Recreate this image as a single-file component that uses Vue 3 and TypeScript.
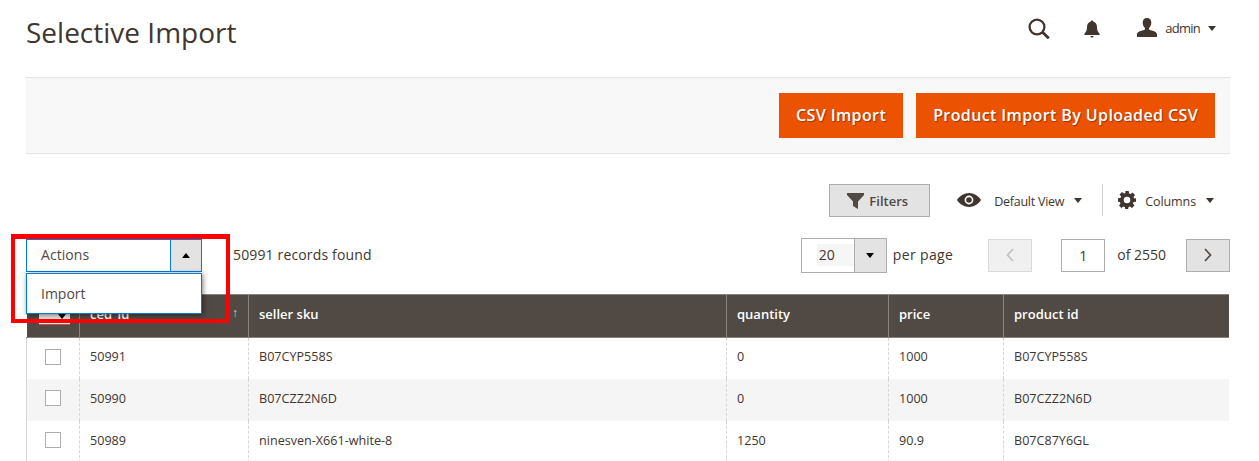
<script setup lang="ts">
interface Row { id: string; sku: string; qty: string; price: string; pid: string }
const rows: Row[] = [
  { id: '50991', sku: 'B07CYP558S', qty: '0', price: '1000', pid: 'B07CYP558S' },
  { id: '50990', sku: 'B07CZZ2N6D', qty: '0', price: '1000', pid: 'B07CZZ2N6D' },
  { id: '50989', sku: 'ninesven-X661-white-8', qty: '1250', price: '90.9', pid: 'B07C87Y6GL' },
]
</script>

<template>
  <div class="page">
    <header class="top">
      <h1>Selective Import</h1>
      <div class="top-icons">
        <svg class="i-search" width="22" height="21" viewBox="0 0 22 21"><circle cx="9" cy="9" r="7.400" fill="none" stroke="#41362f" stroke-width="2.300"/><path d="M14.500 14.300l6.300 6" stroke="#41362f" stroke-width="2.800" fill="none"/></svg>
        <svg class="i-bell" width="16" height="18" viewBox="0 0 16 18"><path d="M8 0.500c.9 0 1.400.6 1.500 1.300C12 2.400 13 4.600 13 7c0 3 .7 5 2.500 6.500V15H.5v-1.500C2.300 12 3 10 3 7c0-2.400 1-4.600 3.500-5.200C6.600 1.100 7.100.5 8 .5z" fill="#41362f"/><path d="M6.500 16h3c0 1-.6 1.500-1.500 1.500S6.500 17 6.500 16z" fill="#41362f"/></svg>
        <svg class="i-user" width="20" height="19" viewBox="0 0 20 19"><path d="M10 0c2.800 0 4.300 2 4.300 4.800 0 2.300-1 4.200-2.300 5.200v1.500c1 .8 8 1.500 8 5V19H0v-2.500c0-3.500 7-4.200 8-5V10C6.700 9 5.700 7.100 5.700 4.800 5.700 2 7.200 0 10 0z" fill="#41362f"/></svg>
        <span class="admin">admin</span>
        <i class="caret"></i>
      </div>
    </header>

    <div class="actions-bar">
      <button class="orange first">CSV Import</button>
      <button class="orange">Product Import By Uploaded CSV</button>
    </div>

    <div class="tools">
      <button class="filters">
        <svg width="17" height="16" viewBox="0 0 17 16"><path d="M0 0h17v2l-6 6.500V16l-5-3V8.500L0 2z" fill="#514943"/></svg>
        Filters
      </button>
      <div class="view">
        <svg width="24" height="14" viewBox="0 0 24 14"><path d="M12 0c5 0 9.500 3 12 7-2.500 4-7 7-12 7S2.500 11 0 7c2.500-4 7-7 12-7z" fill="#41362f"/><circle cx="12" cy="7" r="4.400" fill="#fff"/><circle cx="12" cy="7" r="2.800" fill="#41362f"/></svg>
        <span>Default View</span>
        <i class="caret"></i>
      </div>
      <div class="columns">
        <svg width="18" height="18" viewBox="0 0 18 18"><path fill="#41362f" fill-rule="evenodd" d="M7.300 0h3.400l.4 2.500 1.500.6 2-1.500 2.400 2.400-1.500 2 .6 1.500L18 7.300v3.400l-2.500.4-.6 1.500 1.500 2-2.400 2.400-2-1.500-1.500.6-.4 2.500H7.300l-.4-2.500-1.500-.6-2 1.500L1 14.600l1.500-2-.6-1.500L0 10.700V7.300l2.500-.4.600-1.500-1.500-2L4 1l2 1.500 1.500-.6zM9 5.700a3.300 3.300 0 100 6.600 3.300 3.300 0 000-6.600z"/></svg>
        <span>Columns</span>
        <i class="caret"></i>
      </div>
    </div>

    <div class="grid-bar">
      <div class="select">
        <span class="select-label">Actions</span>
        <span class="select-btn"><i class="caret up"></i></span>
      </div>
      <span class="found">50991 records found</span>
      <div class="pager">
        <div class="size">
          <span class="size-val"><b>20</b></span>
          <span class="size-btn"><i class="caret"></i></span>
        </div>
        <span class="per">per page</span>
        <button class="nav off"><svg width="10" height="14" viewBox="0 0 10 14"><path d="M8 1L2.500 7 8 13" fill="none" stroke="#c4c2c0" stroke-width="1.700"/></svg></button>
        <span class="cur">1</span>
        <span class="of">of 2550</span>
        <button class="nav"><svg width="10" height="14" viewBox="0 0 10 14"><path d="M2 1l5.500 6L2 13" fill="none" stroke="#514943" stroke-width="1.700"/></svg></button>
      </div>
    </div>

    <table>
      <colgroup>
        <col class="c0" /><col class="c1" /><col class="c2" /><col class="c3" /><col class="c4" /><col />
      </colgroup>
      <thead>
        <tr>
          <th class="chk-h"><span class="head-chk"><i></i></span></th>
          <th class="sort">ced_id<span class="arrow">↑</span></th>
          <th>seller sku</th>
          <th>quantity</th>
          <th>price</th>
          <th>product id</th>
        </tr>
      </thead>
      <tbody>
        <tr v-for="r in rows" :key="r.id">
          <td class="chk"><span class="box"></span></td>
          <td>{{ r.id }}</td>
          <td>{{ r.sku }}</td>
          <td>{{ r.qty }}</td>
          <td>{{ r.price }}</td>
          <td>{{ r.pid }}</td>
        </tr>
      </tbody>
    </table>

    <div class="menu">Import</div>
    <div class="highlight"></div>
  </div>
</template>

<style>
html, body { margin: 0; background: #fff; overflow: hidden; }
</style>

<style scoped>
.page {
  position: relative;
  width: 1259px;
  height: 461px;
  overflow: hidden;
  padding: 0 29px 0 26px;
  box-sizing: border-box;
  font-family: "Open Sans", sans-serif;
  color: #41362f;
  font-size: 14px;
}
.top {
  height: 77px;
  display: flex;
  justify-content: space-between;
}
h1 {
  margin: 13px 0 0;
  font-size: 28px;
  font-weight: 400;
  line-height: 38px;
  color: #41362f;
}
.top-icons {
  display: flex;
  align-items: center;
  height: 20px;
  margin-top: 18px;
  margin-right: 14px;
}
.i-search { margin-right: 34px; margin-top: 1px; }
.i-bell { margin-right: 37px; margin-top: 2px; }
.i-user { margin-right: 8px; margin-top: -1px; }
.admin { font-size: 13px; letter-spacing: -0.75px; margin-right: 8px; }
.caret {
  display: inline-block;
  width: 0;
  height: 0;
  border-left: 4.500px solid transparent;
  border-right: 4.500px solid transparent;
  border-top: 5px solid #41362f;
}
.caret.up { border-top: 0; border-bottom: 5px solid #000; }
.actions-bar {
  height: 75px;
  background: #f8f8f8;
  border-top: 1px solid #e3e3e3;
  border-bottom: 1px solid #e3e3e3;
  display: flex;
  align-items: center;
  justify-content: flex-end;
  padding-right: 15px;
}
.orange {
  height: 45px;
  padding: 0 17px 2px;
  background: #eb5202;
  border: 0;
  color: #fff;
  font-family: inherit;
  font-size: 16px;
  font-weight: 600;
  letter-spacing: 0.39px;
  text-shadow: 1px 1px 1px rgba(0, 0, 0, .35);
}
.first { margin-right: 13px; }
.tools {
  display: flex;
  align-items: center;
  justify-content: flex-end;
  height: 34px;
  margin-top: 29px;
  padding-right: 16px;
  font-size: 12.500px;
}
.filters {
  width: 101px;
  height: 33px;
  background: #e3e3e3;
  border: 1px solid #adadad;
  font-family: inherit;
  font-size: 13px;
  font-weight: 600;
  color: #514943;
  display: flex;
  align-items: center;
  justify-content: center;
  gap: 5px;
  padding: 2px 4px 0 0;
  margin-right: 27px;
}
.filters svg { margin-top: -1px; }
.view { display: flex; align-items: center; height: 32px; padding-right: 20px; border-right: 1px solid #d1d1d1; margin-right: 15px; }
.view span { margin: 2px 10px 0 13px; letter-spacing: -0.250px; }
.columns { display: flex; align-items: center; }
.columns span { margin: 2px 10px 0 9px; letter-spacing: -0.100px; }
.grid-bar {
  display: flex;
  align-items: center;
  height: 34px;
  margin-top: 21px;
  margin-bottom: 22px;
}
.select {
  width: 176px;
  height: 33px;
  box-sizing: border-box;
  border: 1px solid #007bdb;
  display: flex;
  color: #514943;
}
.select-label { flex: 1; padding-left: 14px; line-height: 30px; letter-spacing: 0.050px; }
.select-btn {
  width: 30px;
  background: #e3e3e3;
  border-left: 1px solid #007bdb;
  display: flex;
  align-items: center;
  justify-content: center;
}
.found { margin-left: 31px; color: #41362f; letter-spacing: 0.150px; padding-bottom: 2px; }
.pager { margin-left: auto; display: flex; align-items: center; }
.size {
  width: 86px;
  height: 35px;
  box-sizing: border-box;
  border: 1px solid #adadad;
  display: flex;
}
.size-val { flex: 1; display: flex; align-items: center; padding-left: 15px; }
.size-val b { font-weight: 400; background: #f6f6f6; flex: 1; height: 22px; line-height: 21px; padding-left: 2px; }
.size-btn { width: 31px; background: #e3e3e3; border-left: 1px solid #adadad; display: flex; align-items: center; justify-content: center; }
.size-btn .caret { border-top-color: #000; }
.per { margin-left: 6px; margin-right: 35px; letter-spacing: 0.350px; padding-bottom: 1px; }
.nav {
  width: 44px;
  height: 33px;
  padding: 0;
  background: #e3e3e3;
  border: 1px solid #adadad;
  display: flex;
  align-items: center;
  justify-content: center;
}
.nav.off { background: #f0f0f0; border-color: #d9d9d9; }
.cur {
  width: 44px;
  height: 33px;
  box-sizing: border-box;
  border: 1px solid #adadad;
  margin-left: 29px;
  text-align: center;
  line-height: 31px;
}
.of { margin: 0 20px 0 12px; padding-bottom: 1px; }
table {
  width: 1203px;
  border-collapse: collapse;
  table-layout: fixed;
  color: #41362f;
  font-size: 12.600px;
}
.c0 { width: 53px; }
.c1 { width: 169px; }
.c2 { width: 478px; }
.c3 { width: 162px; }
.c4 { width: 115px; }
th {
  height: 43px;
  padding: 0 10px 5px;
  box-sizing: border-box;
  background: #514943;
  color: #fff;
  font-weight: 600;
  font-size: 13px;
  text-align: left;
  border: 1px solid #8a837f;
}
th:last-child { border-right: 0; }
th:first-child { border-left: 0; }
th.chk-h { padding: 0 10px; }
.sort { position: relative; }
.arrow { position: absolute; right: 10px; top: 9px; font-size: 12px; font-weight: 400; color: #d5d2d0; }
.head-chk {
  display: block;
  width: 31px;
  height: 16px;
  margin: 0 0 0 2px;
  background: #e3e3e3;
  position: relative;
  border-bottom: 1px solid #b85a52;
}
.head-chk i {
  position: absolute;
  right: 4px;
  top: 6px;
  border-left: 4.500px solid transparent;
  border-right: 4.500px solid transparent;
  border-top: 5px solid #000;
}
td {
  height: 42px;
  padding: 0 10px 3px;
  box-sizing: border-box;
  border-left: 1px dashed #d6d6d6;
  border-right: 1px dashed #d6d6d6;
}
tbody tr:first-child td { height: 41px; }
td:last-child { border-right: 0; }
tbody tr:nth-child(even) td { background: #f5f5f5; }
td.chk { border-left: 1px solid #d6d6d6; }
.box {
  display: block;
  width: 16px;
  height: 16px;
  box-sizing: border-box;
  border: 1px solid #adadad;
  background: #fff;
  margin-left: 8px;
}
.menu {
  position: absolute;
  left: 26px;
  top: 273px;
  width: 176px;
  height: 41px;
  box-sizing: border-box;
  border: 1px solid #007bdb;
  background: #fff;
  padding-left: 14px;
  line-height: 39px;
  color: #514943;
  box-shadow: 1px 1px 5px rgba(0, 0, 0, .5);
}
.highlight {
  position: absolute;
  left: 11px;
  top: 234px;
  width: 219px;
  height: 89px;
  box-sizing: border-box;
  border: 4px solid #fe0000;
  border-top-width: 5px;
}
</style>
